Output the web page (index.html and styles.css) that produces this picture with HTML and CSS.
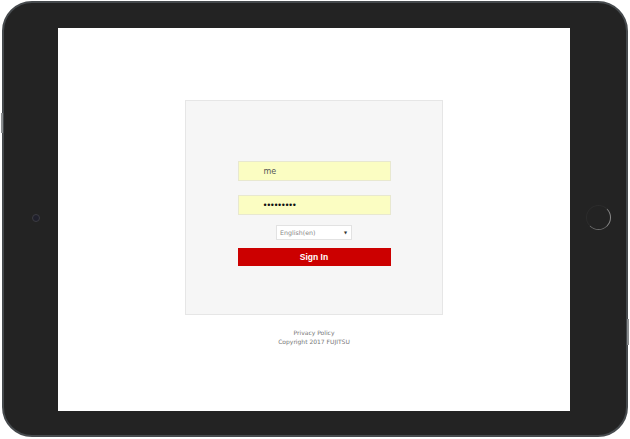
FILE: index.html
```html
<!DOCTYPE html>
<html>
<head>
<meta charset="utf-8">
<link rel="stylesheet" href="styles.css">
</head>
<body>
<div class="device">
  <div class="side-key key-left"></div>
  <div class="side-key key-right"></div>
  <div class="bezel-left"><span class="camera"></span></div>
  <div class="screen">
    <div class="card">
      <div class="field"><span class="field-text">me</span></div>
      <div class="field pass"><span class="field-text dots">•••••••••</span></div>
      <div class="select"><span>English(en)</span><span class="caret">▼</span></div>
      <div class="button">Sign In</div>
    </div>
    <div class="footer">
      <div>Privacy Policy</div>
      <div>Copyright 2017 FUJITSU</div>
    </div>
  </div>
  <div class="bezel-right"><span class="home"></span></div>
</div>
</body>
</html>
```
FILE: styles.css
```css
html, body { margin: 0; padding: 0; background: #ffffff; }
body { font-family: "DejaVu Sans", Verdana, sans-serif; }
.device {
  position: relative;
  margin: 1px 0 0 2px;
  width: 622px;
  height: 432px;
  border: 2px solid #464a4d;
  border-radius: 30px;
  background: #232323;
  display: flex;
  align-items: flex-start;
}
.side-key { position: absolute; width: 2px; background: #8a8d8f; }
.key-left { left: -3px; top: 110px; height: 20px; }
.key-right { right: -3px; top: 316px; height: 26px; }
.bezel-left { width: 54px; height: 100%; display: flex; align-items: center; justify-content: center; }
.camera { width: 6px; height: 6px; border-radius: 50%; border: 1px solid #3c3c42; background: #20202c; margin-left: 10px; margin-top: -3px; }
.screen {
  margin-top: 25px;
  width: 512px;
  height: 383px;
  background: #ffffff;
  display: flex;
  flex-direction: column;
  align-items: center;
}
.bezel-right { flex: 1; height: 100%; display: flex; align-items: center; justify-content: center; }
.home { width: 23px; height: 23px; border-radius: 50%; border: 1px solid #2c2c2c; border-right-color: #8a8a8a; border-bottom-color: #6a6a6a; margin-left: 0; margin-top: -3px; }
.card {
  margin-top: 72px;
  width: 256px;
  height: 213px;
  background: #f6f6f6;
  border: 1px solid #e6e6e6;
  display: flex;
  flex-direction: column;
  align-items: center;
}
.field {
  margin-top: 60px;
  width: 151px;
  height: 18px;
  background: #fbfdc2;
  border: 1px solid #e8e8d0;
  display: flex;
  align-items: center;
}
.field.pass { margin-top: 14px; }
.field-text { margin-left: 25px; font-size: 8px; color: #555; }
.dots { font-family: "Liberation Sans", Arial, sans-serif; color: #111; font-size: 9px; letter-spacing: 0.5px; }
.select {
  margin-top: 10px;
  height: 13px;
  background: #fff;
  border: 1px solid #e2e2e2;
  display: flex;
  align-items: center;
  justify-content: space-between;
  font-size: 6.3px;
  color: #888;
  padding: 0 4px 0 3px;
  width: 67px;
}
.caret { color: #333; font-size: 4px; }
.button {
  margin-top: 8px;
  width: 153px;
  height: 18px;
  background: #cc0000;
  color: #fff;
  font-family: "Liberation Sans", Arial, sans-serif;
  font-size: 8.5px;
  font-weight: bold;
  display: flex;
  align-items: center;
  justify-content: center;
}
.footer {
  margin-top: 13px;
  text-align: center;
  font-size: 6px;
  line-height: 9px;
  color: #777;
}
```
